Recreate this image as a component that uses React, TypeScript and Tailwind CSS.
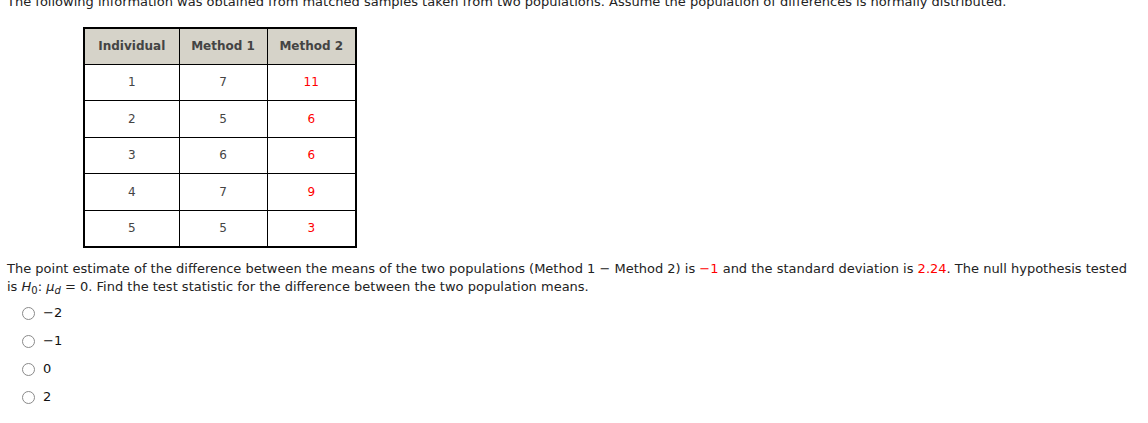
import React from 'react';

const rows = [
  { id: 1, m1: 7, m2: 11 },
  { id: 2, m1: 5, m2: 6 },
  { id: 3, m1: 6, m2: 6 },
  { id: 4, m1: 7, m2: 9 },
  { id: 5, m1: 5, m2: 3 },
];

const options = ['\u22122', '\u22121', '0', '2'];

export default function App() {
  return (
    <div
      className="min-h-screen bg-white text-[13px] text-[#222] overflow-hidden"
      style={{ fontFamily: '"DejaVu Sans", Verdana, sans-serif' }}
    >
      <div className="px-[7px] -mt-[7px] leading-[18px]">
        The following information was obtained from matched samples taken from two populations. Assume the population of differences is normally distributed.
      </div>

      <table className="ml-[83px] mt-[16px] border-collapse border-2 border-black text-[12px]">
        <thead>
          <tr className="h-[36px] bg-[#d6d3c9] text-[#444]">
            <th className="border border-black w-[95px] font-bold">Individual</th>
            <th className="border border-black w-[88px] font-bold">Method 1</th>
            <th className="border border-black w-[89px] font-bold">Method 2</th>
          </tr>
        </thead>
        <tbody>
          {rows.map((r) => (
            <tr key={r.id} className="h-[36.5px] text-center">
              <td className="border border-black text-[#444]">{r.id}</td>
              <td className="border border-black text-[#444]">{r.m1}</td>
              <td className="border border-black text-[#ff0000]">{r.m2}</td>
            </tr>
          ))}
        </tbody>
      </table>

      <p className="px-[7px] mt-[12px] leading-[18px]">
        The point estimate of the difference between the means of the two populations (Method 1 − Method 2) is{' '}
        <span className="text-[#ff0000]">−1</span> and the standard deviation is{' '}
        <span className="text-[#ff0000]">2.24</span>. The null hypothesis tested is{' '}
        <i>H</i>
        <span className="relative top-[3px] text-[10px] leading-none">0</span>: <i>μ</i>
        <span className="relative top-[3px] text-[10px] leading-none italic">d</span> = 0. Find the test statistic for the difference between the two population means.
      </p>

      <div className="mt-[10px] ml-[22px] flex flex-col gap-[13px]">
        {options.map((o) => (
          <label key={o} className="flex items-center gap-[8px] h-[15px] text-[#111]">
            <span className="w-[13px] h-[13px] rounded-full border border-[#8a8a8a] bg-white" />
            <span>{o}</span>
          </label>
        ))}
      </div>
    </div>
  );
}
